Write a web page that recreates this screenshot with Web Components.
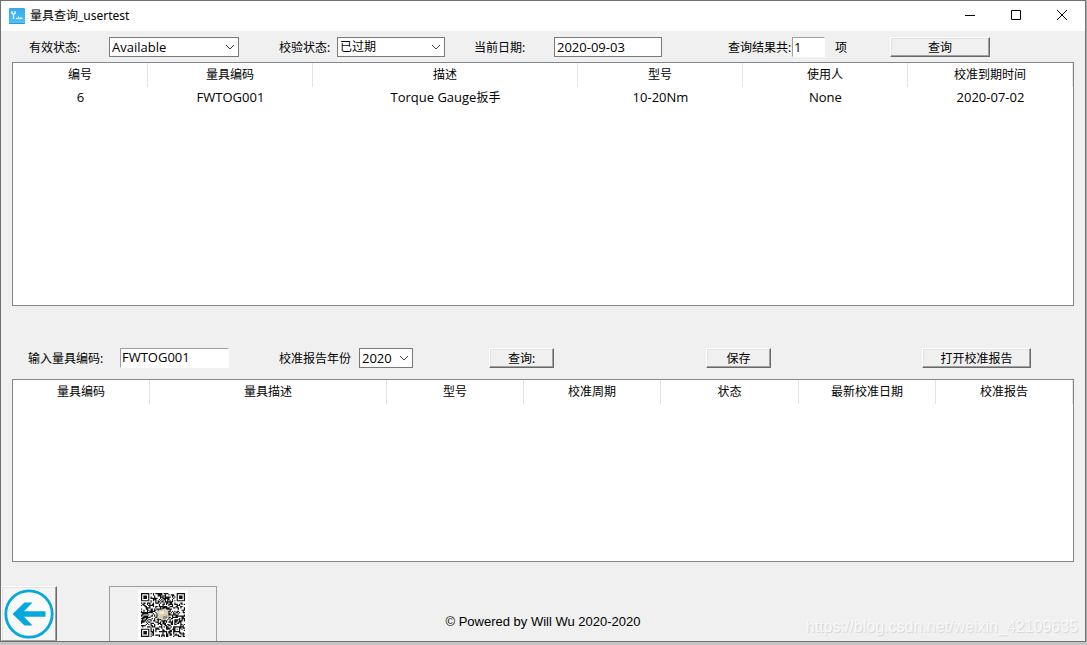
<!DOCTYPE html>
<html lang="zh-CN">
<head>
<meta charset="utf-8">
<title>量具查询_usertest</title>
<style>
html { background: #c4c4c4; }
body { margin: 0; font: 12px/16px "Noto Sans", "Noto Sans CJK SC", sans-serif; color: #000; }
</style>
</head>
<body>
<gauge-app></gauge-app>
<script>
class Base extends HTMLElement {
  render(html) { this.attachShadow({ mode: 'open' }).innerHTML = html; }
  attr(name, fallback = '') { return this.getAttribute(name) ?? fallback; }
}

/* Title bar with program icon and the three window buttons */
customElements.define('title-bar', class extends Base {
  connectedCallback() {
    this.render(`<style>
      :host { display: flex; align-items: center; height: 30px; background: #fff; padding-left: 8px; }
      .logo { width: 16px; height: 16px; margin-right: 5px; }
      .name { flex: 1; }
      button { width: 46px; height: 30px; padding: 0; border: 0; background: none; display: grid; place-items: center; }
      button svg { width: 12px; height: 12px; fill: none; stroke: #000; }
    </style>
    <svg class="logo" viewBox="0 0 16 16"><defs><linearGradient id="g" x1="0" y1="0" x2="0" y2="1"><stop offset="0" stop-color="#35a9ec"/><stop offset="1" stop-color="#4cc4f8"/></linearGradient></defs>
      <rect width="16" height="16" rx="1" fill="url(#g)"/><path d="M0 15h16v1H0z" fill="#2f9bd6"/>
      <path d="M3 3v2.500l1.500 1V11M6 3v2.500L4.500 6.500" fill="none" stroke="#fff" stroke-width="1.300"/><path d="M7 10.500h1.500M9.500 8.500v2M9.500 10.500h4M11.500 9.500h1" stroke="#fff" stroke-width="1"/></svg>
    <span class="name"><slot></slot></span>
    <button aria-label="最小化"><svg viewBox="0 0 12 12"><path d="M1 5.500h10"/></svg></button>
    <button aria-label="最大化"><svg viewBox="0 0 12 12"><path d="M1.500 .500h9v9h-9z"/></svg></button>
    <button aria-label="关闭"><svg viewBox="0 0 12 12"><path d="M1 0l10 10M11 0L1 10"/></svg></button>`);
  }
});

/* Label with a drop-down, a bordered box or a sunken entry */
customElements.define('form-field', class extends Base {
  connectedCallback() {
    const kind = this.attr('kind', 'entry'), value = this.attr('value');
    const size = this.attr('text', '13');
    const control = kind === 'select'
      ? `<span class="combo"><select id="c"><option>${value}</option></select><svg viewBox="0 0 10 6"><path d="M1 1l4 4 4-4"/></svg></span>`
      : `<input id="c" class="${kind}" type="text" value="${value}">`;
    this.render(`<style>
      :host { display: flex; align-items: center; height: 20px; white-space: nowrap; }
      label { flex: none; padding-top: 2px; width: ${this.attr('label-width')}px; }
      input, select { box-sizing: border-box; width: ${this.attr('width')}px; height: 20px; margin: 0; border: 1px solid #7a7a7a;
        border-radius: 0; background: #fff; color: #000; font-family: "Open Sans", "Noto Sans CJK SC", sans-serif; font-size: ${size}px; line-height: 16px; padding: 0 2px; outline: 0; appearance: none; }
      .entry { border-color: #a0a0a0 #fff #fff #a0a0a0; padding: 0 1px 1px; }
      .combo { display: grid; align-items: center; }
      .combo > * { grid-area: 1 / 1; }
      svg { width: 10px; height: 6px; justify-self: end; margin-right: 4px; fill: none; stroke: #404040; pointer-events: none; }
      slot { display: block; margin-left: 10px; padding-top: 2px; }
    </style><label for="c">${this.attr('label')}</label>${control}<slot></slot>`);
  }
});

/* Raised 3D push button */
customElements.define('push-button', class extends Base {
  connectedCallback() {
    this.render(`<style>
      :host { display: block; }
      button { display: block; box-sizing: border-box; width: ${this.attr('width')}px; height: 20px; padding: 2px 0 0; background: #f0f0f0; color: #000;
        border: 1px solid; border-color: #fff #696969 #696969 #fff; box-shadow: inset -1px -1px #a0a0a0, inset 1px 1px #e3e3e3;
        font: inherit; line-height: 16px; white-space: nowrap; }
    </style><button><slot></slot></button>`);
  }
});

/* Table with a heading row; columns are "name:weight" pairs */
customElements.define('record-table', class extends Base {
  connectedCallback() {
    const cols = this.attr('columns').split(',').map(c => c.split(':'));
    const total = cols.reduce((sum, c) => sum + Number(c[1]), 0);
    const rows = JSON.parse(this.attr('rows', '[]'));
    this.render(`<style>
      :host { display: block; background: #fff; border: 1px solid #828790; box-sizing: border-box; overflow: hidden; }
      table { width: 100%; table-layout: fixed; border-collapse: separate; border-spacing: 0; }
      th { height: 24px; box-sizing: border-box; padding: 0; font-weight: 400; border-right: 1px solid #e5e5e5; }
      td { height: 20px; padding: 0; text-align: center; }
      .latin { font-family: "Open Sans", sans-serif; font-size: 13px; }
    </style><table><colgroup>${cols.map(c => `<col style="width:${c[1] / total * 100}%">`).join('')}</colgroup>
    <thead><tr>${cols.map(c => `<th scope="col">${c[0]}</th>`).join('')}</tr></thead>
    <tbody>${rows.map(r => `<tr>${r.map(v => `<td>${v.replace(/[\x20-\x7e]+/g, '<span class="latin">$&</span>')}</td>`).join('')}</tr>`).join('')}</tbody></table>`);
  }
});

/* QR picture: finder, timing and alignment marks with seeded data modules */
customElements.define('qr-code', class extends Base {
  connectedCallback() {
    const n = 37;
    let seed = 20200903, d = '';
    const ring = (x, y, cx, cy) => Math.max(Math.abs(x - cx), Math.abs(y - cy));
    for (let y = 0; y < n; y++) for (let x = 0; x < n; x++) {
      seed = (seed * 1103515245 + 12345) % 2147483648;
      let on = (seed >> 16) % 100 < 52;
      for (const [cx, cy] of [[3, 3], [33, 3], [3, 33]]) {
        const r = ring(x, y, cx, cy);
        if (r <= 4) on = r !== 2 && r !== 4;
      }
      const a = ring(x, y, 30, 30);
      if (a <= 2) on = a !== 1;
      if ((y === 6 && x > 7 && x < 29) || (x === 6 && y > 7 && y < 29)) on = (x + y) % 2 === 0;
      if (on) d += `M${x} ${y}h1v1h-1z`;
    }
    this.render(`<style>:host { display: block; background: #fff; padding: 3px; } svg { display: block; width: 44px; height: 44px; }</style>
    <svg viewBox="0 0 37 37" role="img" aria-label="二维码"><path d="${d}" fill="#111"/>
      <path d="M14 15l6-2 3 2v6l-4 2-5-2z" fill="#d6ceb4"/><path d="M15 16l4-1 1 2-4 1z" fill="#f2ead2"/><path d="M18 20l4-1v2l-3 1z" fill="#8f8870"/></svg>`);
  }
});

customElements.define('page-footer', class extends Base {
  connectedCallback() {
    this.render(`<style>
      :host { display: grid; grid-template-columns: 1fr auto 1fr; height: 55px; padding-top: 24px; overflow: hidden; font: 13px/18px "Liberation Sans", Arial, sans-serif; }
      .left { display: flex; gap: 52px; }
      .back { width: 56px; height: 55px; padding: 0; box-sizing: border-box; border: 1px solid; border-color: #fff #696969 #a0a0a0 #fff;
        box-shadow: inset -1px 0 #a0a0a0, inset 1px 1px #e3e3e3; background: #f5f5f5; display: grid; place-items: center; }
      .back svg { width: 50px; height: 50px; }
      .code { width: 108px; height: 60px; box-sizing: border-box; border: 1px solid #a0a0a0; padding-top: 3px; display: flex; justify-content: center; align-items: flex-start; }
      .copy { padding-top: 27px; white-space: nowrap; }
      .mark { justify-self: end; padding: 32px 7px 0 0; font-size: 16px; color: #f8f8f8; text-shadow: 1px 1px 1px #d4d4d4; white-space: nowrap; }
    </style>
    <div class="left"><button class="back" aria-label="返回"><svg viewBox="0 0 50 50"><circle cx="25" cy="25" r="23.200" fill="#fafafa" stroke="#06a9db" stroke-width="2.800"/>
      <path d="M8.500 25L20.500 13.500h8L20 22.300h21.500v5.400H20l8.500 8.800h-8z" fill="#06a9db"/></svg></button>
      <div class="code"><qr-code></qr-code></div></div>
    <div class="copy"><slot></slot></div>
    <div class="mark"><slot name="mark"></slot></div>`);
  }
});

customElements.define('gauge-app', class extends Base {
  connectedCallback() {
    this.render(`<style>
      :host { display: flex; flex-direction: column; box-sizing: border-box; min-height: calc(100vh - 3px); margin-right: 1px;
        background: #f0f0f0; border: 1px solid #707070; box-shadow: 0 1px 3px #888; }
      .bar { display: grid; align-items: center; padding: 6px 11px 5px 28px; }
      .search { grid-template-columns: minmax(0, 250fr) minmax(0, 195fr) minmax(0, 254fr) minmax(0, 162fr) minmax(0, 184fr); }
      .report { grid-template-columns: minmax(0, 251fr) minmax(0, 210fr) minmax(0, 217fr) minmax(0, 216fr) minmax(0, 152fr); padding: 42px 11px 11px 27px; }
      record-table { margin: 0 11px; min-height: 90px; }
      .results { flex: 4 1 0; }
      .reports { flex: 3 1 0; }
    </style>
    <title-bar>量具查询_usertest</title-bar>
    <div class="bar search">
      <form-field label="有效状态:" label-width="80" kind="select" width="130" value="Available"></form-field>
      <form-field label="校验状态:" label-width="58" kind="select" width="108" value="已过期" text="12"></form-field>
      <form-field label="当前日期:" label-width="80" kind="box" width="108" value="2020-09-03"></form-field>
      <form-field label="查询结果共:" label-width="64" width="33" value="1">项</form-field>
      <push-button width="100">查询</push-button>
    </div>
    <record-table class="results" columns="编号:135,量具编码:165,描述:265,型号:165,使用人:165,校准到期时间:165"
      rows='[["6","FWTOG001","Torque Gauge扳手","10-20Nm","None","2020-07-02"]]'></record-table>
    <div class="bar report">
      <form-field label="输入量具编码:" label-width="92" width="109" value="FWTOG001"></form-field>
      <form-field label="校准报告年份" label-width="80" kind="select" width="54" value="2020"></form-field>
      <push-button width="65">查询:</push-button>
      <push-button width="65">保存</push-button>
      <push-button width="109">打开校准报告</push-button>
    </div>
    <record-table class="reports" columns="量具编码:137,量具描述:237,型号:137,校准周期:137,状态:138,最新校准日期:137,校准报告:137"></record-table>
    <page-footer>© Powered by Will Wu 2020-2020<span slot="mark">https://blog.csdn.net/weixin_42109635</span></page-footer>`);
  }
});
</script>
</body>
</html>
